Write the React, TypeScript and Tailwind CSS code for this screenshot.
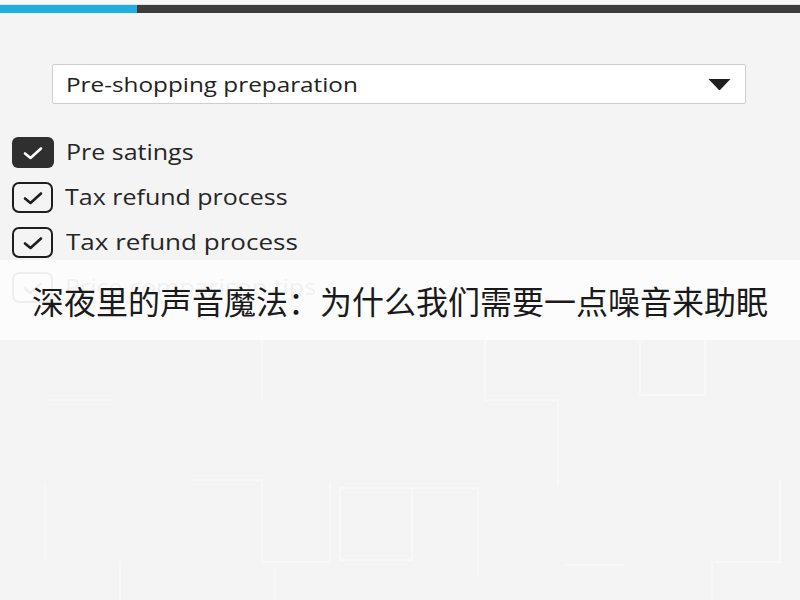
type Item = { label: string; dark?: boolean; faded?: boolean };

const items: Item[] = [
  { label: 'Pre satings', dark: true },
  { label: 'Tax refund process' },
  { label: 'Tax refund process' },
  { label: 'Price comparison tips', faded: true },
];

function CheckIcon({ color }: { color: string }) {
  return (
    <svg width="24" height="16" viewBox="0 0 24 16" fill="none">
      <path d="M4 8.5 L9.5 13 L20 3.5" stroke={color} strokeWidth="2.6" strokeLinecap="round" strokeLinejoin="round" />
    </svg>
  );
}

function Box({ dark, faded }: { dark?: boolean; faded?: boolean }) {
  if (dark) {
    return (
      <div className="w-[42px] h-[31px] rounded-[6px] bg-[#2f2f2f] flex items-center justify-center shrink-0">
        <CheckIcon color="#ffffff" />
      </div>
    );
  }
  return (
    <div
      className={
        faded
          ? 'w-[41px] h-[31px] rounded-[7px] border-2 border-[#bdbdbd] flex items-center justify-center shrink-0'
          : 'w-[41px] h-[31px] rounded-[7px] border-2 border-[#1e1e1e] flex items-center justify-center shrink-0'
      }
    >
      <CheckIcon color={faded ? '#bdbdbd' : '#1e1e1e'} />
    </div>
  );
}

// faint circuit-style lines in the backdrop
function Backdrop() {
  return (
    <svg className="absolute left-0 top-0 pointer-events-none" width="800" height="600" fill="none" stroke="#f9f9f9" strokeWidth="1.5">
      <path d="M48 400 H112" />
      <path d="M262 340 V400" />
      <path d="M485 340 V400 H558 V485" />
      <path d="M640 340 V395 H705 V340" />
      <path d="M45 485 V560" />
      <path d="M190 480 H262 V562 H330 V482" />
      <path d="M120 562 V645 H50" />
      <path d="M340 488 V560 H412 V488 Z" />
      <path d="M412 488 H478 V575" />
      <path d="M565 565 H625" />
      <path d="M715 562 H780 V480" />
      <path d="M275 568 V645" />
      <path d="M560 650 V720" />
      <path d="M712 562 V645" />
    </svg>
  );
}

export default function App() {
  return (
    <div
      className="relative w-[800px] h-[600px] overflow-hidden bg-[#f4f4f4]"
      style={{ fontFamily: '"Open Sans", "Noto Sans", sans-serif' }}
    >
      <Backdrop />

      {/* progress strip */}
      <div className="relative h-[5px] bg-[#f7f7f7] border-b border-[#e2e2e2]" />
      <div className="relative flex h-[8px]">
        <div className="w-[137px] bg-[#1eaee3]" />
        <div className="flex-1 bg-[#3c3c3c]" />
      </div>

      {/* category select */}
      <div className="relative mt-[51px] ml-[52px] w-[694px] h-[40px] bg-white border border-[#cfcfcf] rounded-[2px] flex items-center justify-between pl-[13px] pr-[13px]">
        <span className="inline-block origin-left scale-x-[1.185] text-[20.5px] text-[#222]">Pre-shopping preparation</span>
        <svg width="25" height="13" viewBox="0 0 25 13">
          <path d="M1.5 1 L23.5 1 L13.5 11.5 Q12.5 12.5 11.5 11.5 Z" fill="#1f1f1f" />
        </svg>
      </div>

      {/* checklist */}
      <div className="relative mt-[33px] pl-[12px] flex flex-col gap-[14px]">
        {items.map((item, i) => (
          <div key={i} className="flex items-center gap-[12px] h-[31px]">
            <Box dark={item.dark} faded={item.faded} />
            <span
              className={
                item.faded
                  ? 'inline-block origin-left scale-x-[1.19] text-[21px] text-[#c4c4c4]'
                  : i === 2
                    ? 'inline-block origin-left scale-x-[1.21] text-[21.5px] text-[#262626] ml-[1px]'
                    : 'inline-block origin-left scale-x-[1.19] text-[21px] text-[#262626]'
              }
            >
              {item.label}
            </span>
          </div>
        ))}
      </div>

      {/* caption band */}
      <div className="absolute left-0 top-[260px] w-full h-[80px] bg-white/75 flex items-center justify-center">
        <span
          className="text-[32px] text-[#1a1a1a] leading-none"
          style={{ fontFamily: '"Noto Sans CJK SC", sans-serif' }}
        >
          深夜里的声音魔法：为什么我们需要一点噪音来助眠
        </span>
      </div>
    </div>
  );
}
